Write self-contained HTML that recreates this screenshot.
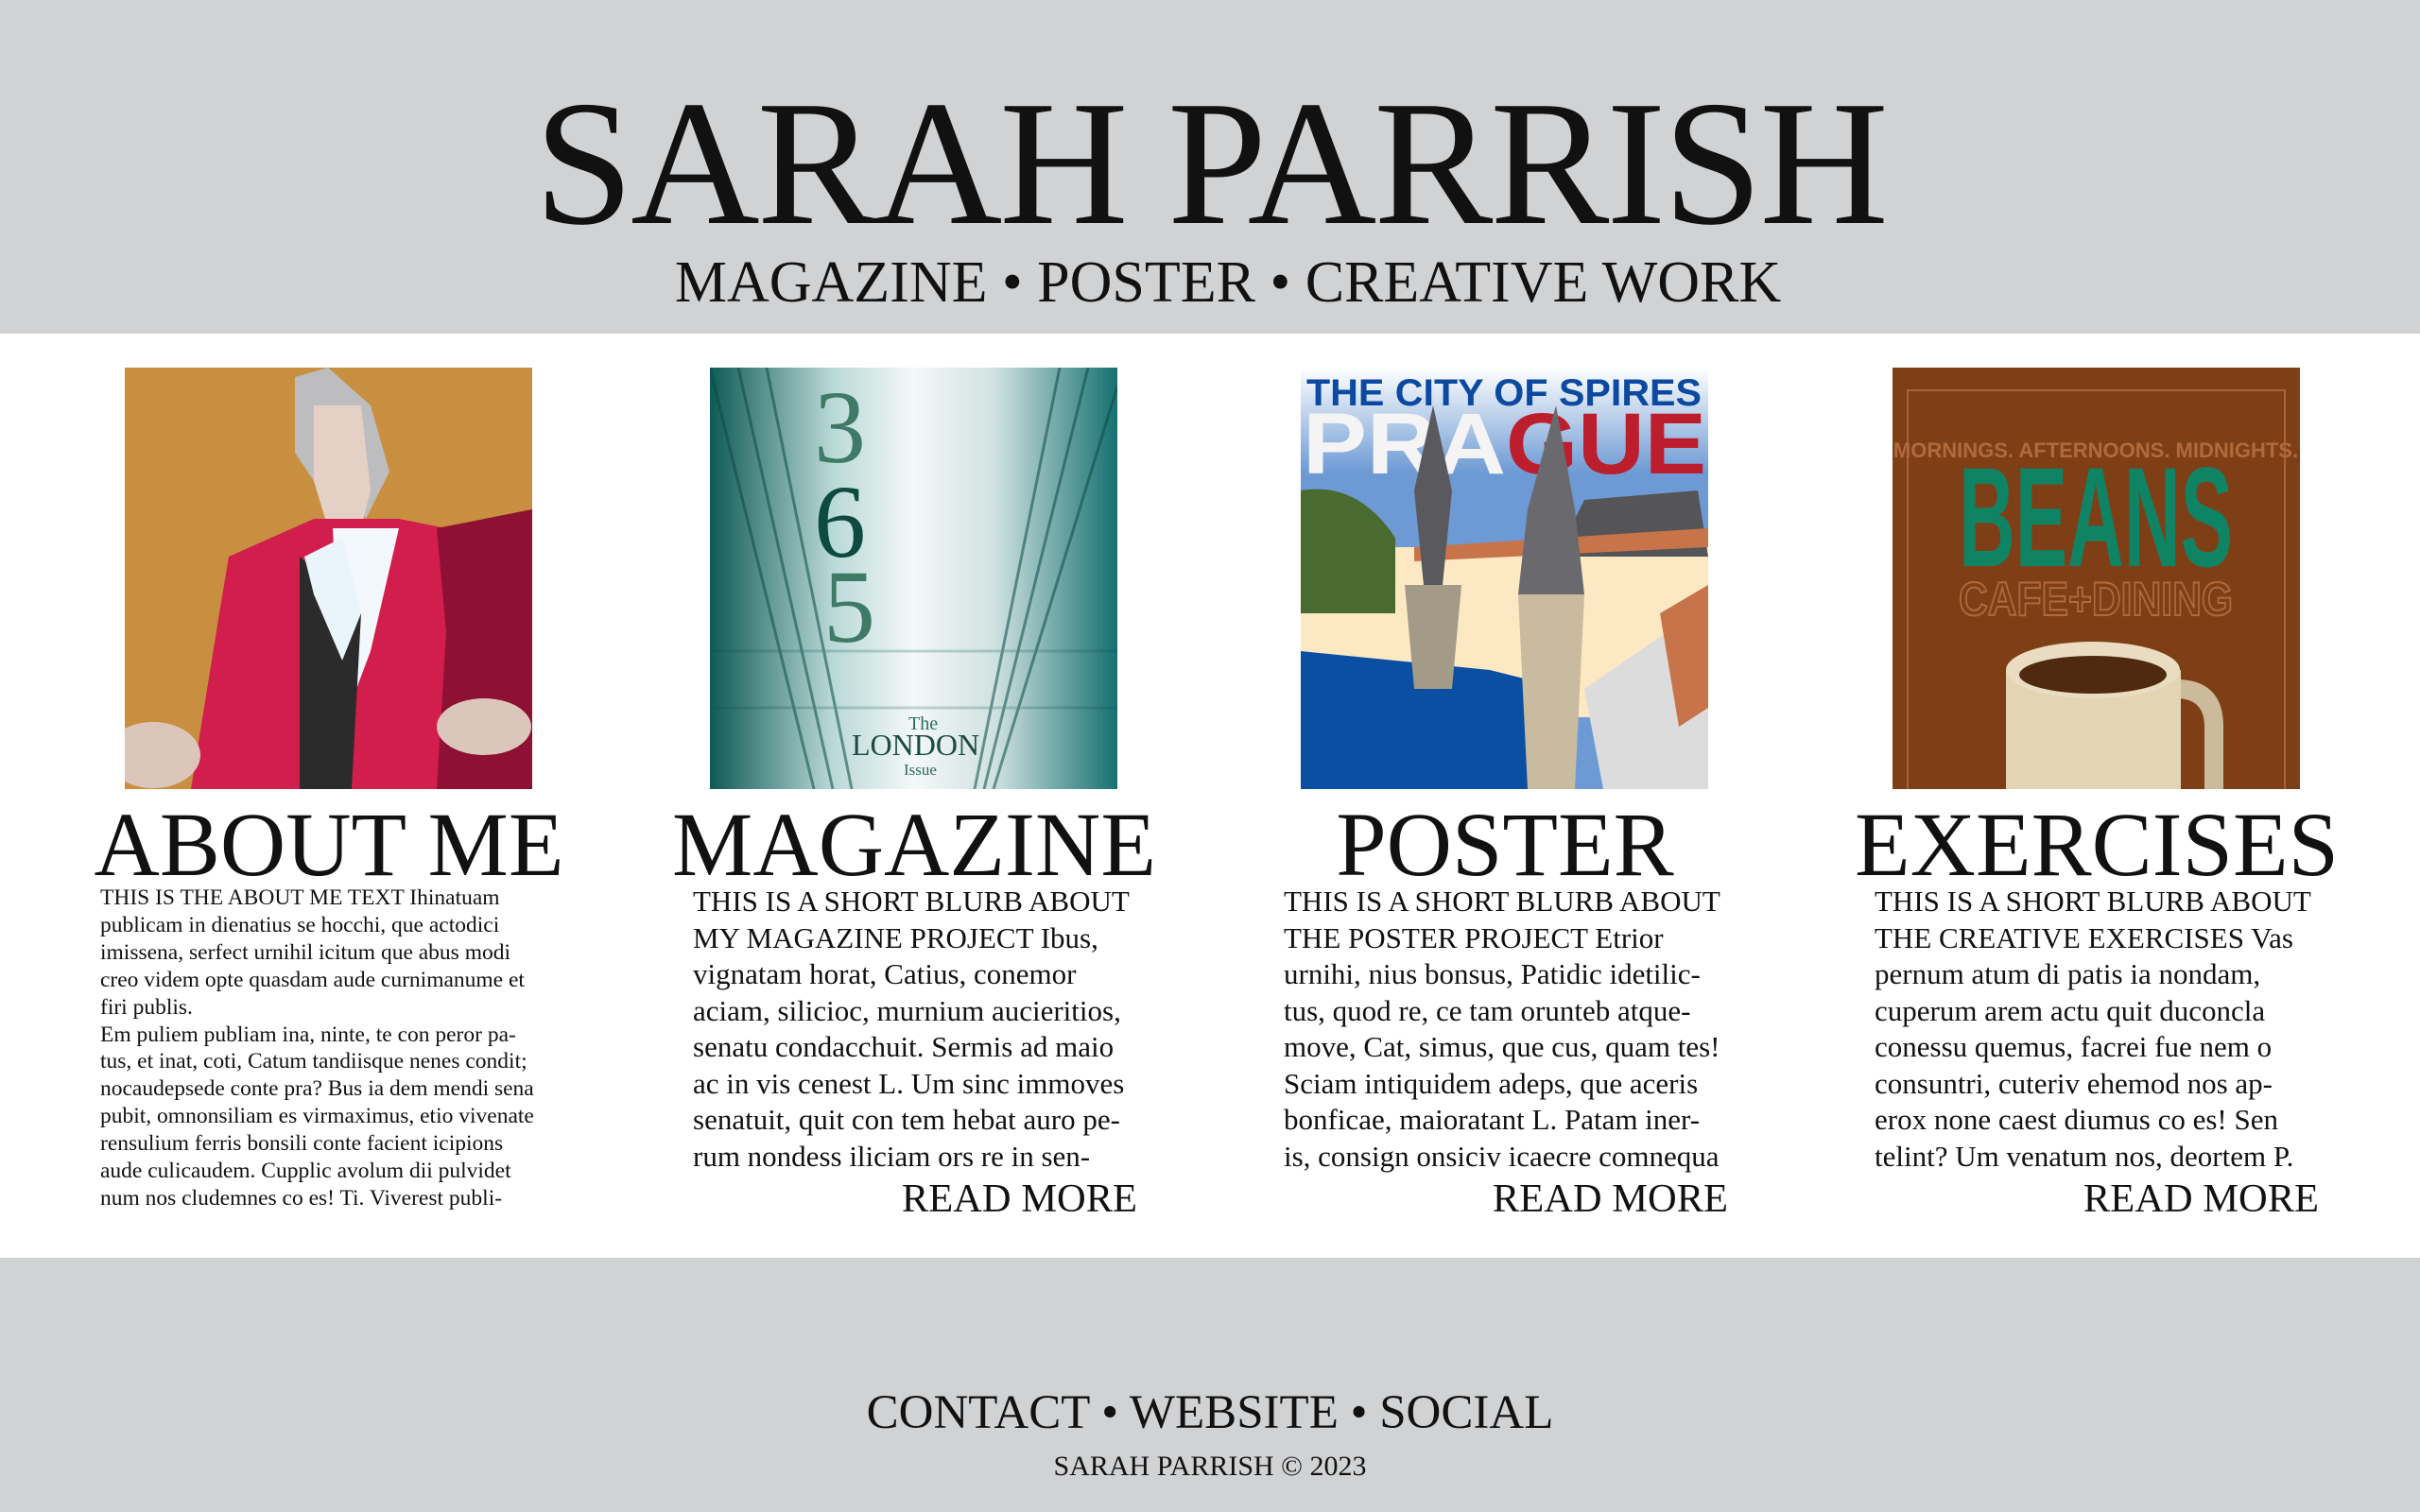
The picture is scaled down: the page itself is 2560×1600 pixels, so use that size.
<!DOCTYPE html>
<html><head><meta charset="utf-8">
<style>
html,body{margin:0;padding:0;}
body{width:2560px;height:1600px;position:relative;overflow:hidden;background:#fff;font-family:"Liberation Serif",serif;color:#111;}
.hdr{position:absolute;left:0;top:0;width:2560px;height:353px;background:#d1d2d4;}
.ftr{position:absolute;left:0;top:1331px;width:2560px;height:269px;background:#d1d2d4;}
.t{position:absolute;white-space:nowrap;line-height:1;}
.img{position:absolute;top:389px;width:431px;height:446px;overflow:hidden;}
.h{position:absolute;top:846px;font-size:96px;line-height:1;text-align:center;width:600px;white-space:nowrap;}
.body{position:absolute;top:935px;white-space:nowrap;}
.s{font-size:23.5px;line-height:28.9px;}
.b{font-size:31px;line-height:38.5px;}
.rm{position:absolute;top:1248px;font-size:42.5px;line-height:1;text-align:right;}
</style></head><body>
<div class="hdr"></div>
<div class="t" style="left:0;width:2560px;text-align:center;top:78px;font-size:189px;letter-spacing:-3px;">SARAH PARRISH</div>
<div class="t" style="left:19px;width:2560px;text-align:center;top:268px;font-size:62px;">MAGAZINE • POSTER • CREATIVE WORK</div>

<div class="img" style="left:132px;">
<svg width="431" height="446" viewBox="0 0 431 446">
<rect width="431" height="446" fill="#c98f40"/>
<polygon points="180,10 215,0 260,40 280,110 255,160 230,100 200,120 180,90" fill="#bdbdbf"/>
<polygon points="200,40 250,40 260,130 250,170 215,170 200,120" fill="#e5d0c6"/>
<polygon points="110,200 200,160 290,160 340,170 431,150 431,446 70,446 100,260" fill="#d21e4c"/>
<polygon points="330,170 431,150 431,446 330,446 340,280" fill="#8e1032"/>
<polygon points="220,170 290,170 260,300 230,380" fill="#f2f8fc"/>
<polygon points="185,200 250,260 240,446 185,446" fill="#2b2b2b"/>
<polygon points="190,200 230,180 250,260 230,310 200,240" fill="#eaf4fb"/>
<ellipse cx="30" cy="410" rx="50" ry="35" fill="#dcc6bb"/>
<ellipse cx="380" cy="380" rx="50" ry="30" fill="#dcc6bb"/>
</svg></div>

<div class="img" style="left:751px;">
<svg width="431" height="446" viewBox="0 0 431 446">
<defs><linearGradient id="g2" x1="0" x2="1"><stop offset="0" stop-color="#0f5a55"/><stop offset=".3" stop-color="#b9d9d6"/><stop offset=".5" stop-color="#f4f8f8"/><stop offset=".7" stop-color="#cfe2e0"/><stop offset="1" stop-color="#167070"/></linearGradient></defs>
<rect width="431" height="446" fill="url(#g2)"/>
<g stroke="#0c4a47" stroke-width="3" opacity=".55">
<line x1="0" y1="0" x2="110" y2="446"/><line x1="30" y1="0" x2="130" y2="446"/><line x1="60" y1="0" x2="150" y2="446"/>
<line x1="431" y1="20" x2="300" y2="446"/><line x1="400" y1="0" x2="290" y2="446"/><line x1="370" y1="0" x2="280" y2="446"/>
<line x1="0" y1="300" x2="431" y2="300" opacity=".4"/><line x1="0" y1="360" x2="431" y2="360" opacity=".4"/>
</g>
<text x="110" y="100" font-family="Liberation Serif" font-size="110" fill="#3f7a67">3</text>
<text x="110" y="200" font-family="Liberation Serif" font-size="110" fill="#0f4a40">6</text>
<text x="120" y="290" font-family="Liberation Serif" font-size="110" fill="#3f7a67">5</text>
<text x="210" y="383" font-family="Liberation Serif" font-size="20" fill="#2a6e5c">The</text>
<text x="150" y="410" font-family="Liberation Serif" font-size="32" fill="#1d4a40">LONDON</text>
<text x="205" y="431" font-family="Liberation Serif" font-size="17" fill="#2a6e5c">Issue</text>
</svg></div>

<div class="img" style="left:1376px;">
<svg width="431" height="446" viewBox="0 0 431 446">
<defs><linearGradient id="g3" x1="0" y1="0" x2="0" y2="1"><stop offset="0" stop-color="#fff"/><stop offset=".25" stop-color="#6d9ad4"/><stop offset="1" stop-color="#6d9ad4"/></linearGradient></defs>
<rect width="431" height="446" fill="url(#g3)"/>
<text x="6" y="40" font-family="Liberation Sans" font-weight="bold" font-size="40" fill="#0b4aa0" textLength="418" lengthAdjust="spacingAndGlyphs">THE CITY OF SPIRES</text>
<text x="2" y="112" font-family="Liberation Sans" font-weight="bold" font-size="92" fill="#f4f4f4" textLength="215" lengthAdjust="spacingAndGlyphs">PRA</text>
<text x="217" y="112" font-family="Liberation Sans" font-weight="bold" font-size="92" fill="#bd1e2e" textLength="212" lengthAdjust="spacingAndGlyphs">GUE</text>
<rect x="0" y="190" width="431" height="180" fill="#fde8c4"/>
<path d="M0 130 Q60 120 100 180 L100 260 L0 260Z" fill="#496b30"/>
<polygon points="300,140 420,130 431,200 270,200" fill="#555456"/>
<polygon points="120,190 431,170 431,190 120,205" fill="#c8744a"/>
<polygon points="0,300 0,446 240,446 280,340 200,320" fill="#0b4fa3"/>
<polygon points="120,130 140,40 160,130 150,230 130,230" fill="#5a5a5e"/>
<polygon points="110,230 170,230 160,340 120,340" fill="#a39a88"/>
<polygon points="240,150 270,40 290,150 300,240 230,240" fill="#6a6a6e"/>
<polygon points="230,240 300,240 290,446 240,446" fill="#c8bb9f"/>
<polygon points="300,340 431,250 431,446 320,446" fill="#dcdcdc"/>
<polygon points="380,260 431,230 431,360 400,380" fill="#c8744a"/>
</svg></div>

<div class="img" style="left:2002px;">
<svg width="431" height="446" viewBox="0 0 431 446">
<rect width="431" height="446" fill="#7e3f17"/>
<rect x="16" y="24" width="399" height="430" fill="none" stroke="#a86238" stroke-width="2"/>
<text x="215" y="95" text-anchor="middle" font-family="Liberation Sans" font-weight="bold" font-size="22" fill="#b06a3c">MORNINGS. AFTERNOONS. MIDNIGHTS.</text>
<text x="215" y="210" text-anchor="middle" font-family="Liberation Sans" font-weight="bold" font-size="150" fill="#0e8465" textLength="290" lengthAdjust="spacingAndGlyphs">BEANS</text>
<text x="215" y="262" text-anchor="middle" font-family="Liberation Sans" font-weight="bold" font-size="50" fill="none" stroke="#b06a3c" stroke-width="2" textLength="290" lengthAdjust="spacingAndGlyphs">CAFE+DINING</text>
<path d="M300 330 q50 0 50 50 l0 66 l-20 0 l0 -66 q0 -30 -30 -30z" fill="#ccbb9a"/>
<rect x="120" y="320" width="185" height="126" fill="#e3d4b4"/>
<ellipse cx="212" cy="320" rx="92" ry="30" fill="#e9dcc0"/>
<ellipse cx="212" cy="325" rx="78" ry="20" fill="#4f2a10"/>
</svg></div>

<div class="h" style="left:48px;">ABOUT ME</div>
<div class="h" style="left:667px;">MAGAZINE</div>
<div class="h" style="left:1292px;">POSTER</div>
<div class="h" style="left:1918px;">EXERCISES</div>

<div class="body s" style="left:106px;top:936px;">THIS IS THE ABOUT ME TEXT Ihinatuam<br>publicam in dienatius se hocchi, que actodici<br>imissena, serfect urnihil icitum que abus modi<br>creo videm opte quasdam aude curnimanume et<br>firi publis.<br>Em puliem publiam ina, ninte, te con peror pa-<br>tus, et inat, coti, Catum tandiisque nenes condit;<br>nocaudepsede conte pra? Bus ia dem mendi sena<br>pubit, omnonsiliam es virmaximus, etio vivenate<br>rensulium ferris bonsili conte facient icipions<br>aude culicaudem. Cupplic avolum dii pulvidet<br>num nos cludemnes co es! Ti. Viverest publi-</div>

<div class="body b" style="left:733px;">THIS IS A SHORT BLURB ABOUT<br>MY MAGAZINE PROJECT Ibus,<br>vignatam horat, Catius, conemor<br>aciam, silicioc, murnium aucieritios,<br>senatu condacchuit. Sermis ad maio<br>ac in vis cenest L. Um sinc immoves<br>senatuit, quit con tem hebat auro pe-<br>rum nondess iliciam ors re in sen-</div>
<div class="body b" style="left:1358px;">THIS IS A SHORT BLURB ABOUT<br>THE POSTER PROJECT Etrior<br>urnihi, nius bonsus, Patidic idetilic-<br>tus, quod re, ce tam orunteb atque-<br>move, Cat, simus, que cus, quam tes!<br>Sciam intiquidem adeps, que aceris<br>bonficae, maioratant L. Patam iner-<br>is, consign onsiciv icaecre comnequa</div>
<div class="body b" style="left:1983px;">THIS IS A SHORT BLURB ABOUT<br>THE CREATIVE EXERCISES Vas<br>pernum atum di patis ia nondam,<br>cuperum arem actu quit duconcla<br>conessu quemus, facrei fue nem o<br>consuntri, cuteriv ehemod nos ap-<br>erox none caest diumus co es! Sen<br>telint? Um venatum nos, deortem P.</div>

<div class="rm" style="left:800px;width:403px;">READ MORE</div>
<div class="rm" style="left:1425px;width:403px;">READ MORE</div>
<div class="rm" style="left:2050px;width:403px;">READ MORE</div>

<div class="ftr"></div>
<div class="t" style="left:0;width:2560px;text-align:center;top:1470px;font-size:51px;">CONTACT • WEBSITE • SOCIAL</div>
<div class="t" style="left:0;width:2560px;text-align:center;top:1537px;font-size:30px;">SARAH PARRISH © 2023</div>
</body></html>
